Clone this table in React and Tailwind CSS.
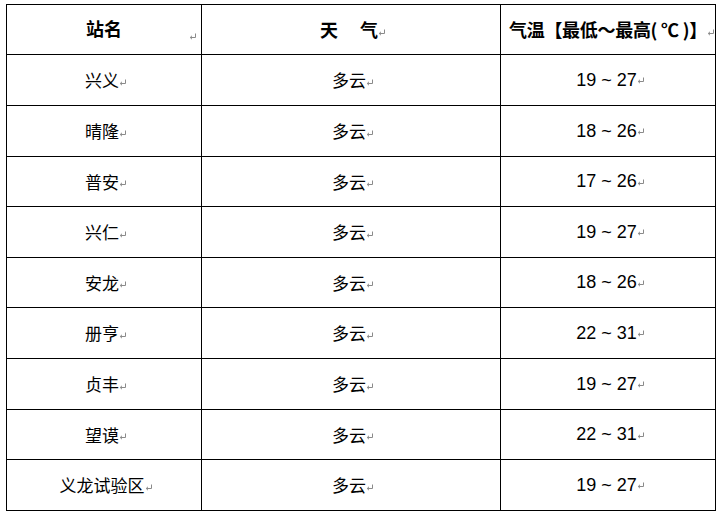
import React from "react";

const rows = [
  ["兴义", "多云", "19 ~ 27"],
  ["晴隆", "多云", "18 ~ 26"],
  ["普安", "多云", "17 ~ 26"],
  ["兴仁", "多云", "19 ~ 27"],
  ["安龙", "多云", "18 ~ 26"],
  ["册亨", "多云", "22 ~ 31"],
  ["贞丰", "多云", "19 ~ 27"],
  ["望谟", "多云", "22 ~ 31"],
  ["义龙试验区", "多云", "19 ~ 27"],
];
const heights = ["h-[51px]", "h-[51px]", "h-[50px]", "h-[51px]", "h-[50px]", "h-[51px]", "h-[51px]", "h-[50px]", "h-[51px]"];

const cjk = { fontFamily: '"Noto Sans CJK SC", "Noto Sans", sans-serif' };
const arial = { fontFamily: '"Liberation Sans", Arial, sans-serif' };

function Mark({ className = "" }) {
  return (
    <svg width="8" height="8" viewBox="0 0 8 8" className={"inline-block " + className}>
      <path d="M6.5 0.5 V4.5 H1.5" stroke="#8a8a8a" strokeWidth="1" fill="none" />
      <path d="M3 2.8 L1.2 4.5 L3 6.2" stroke="#8a8a8a" strokeWidth="1" fill="none" />
    </svg>
  );
}

export default function App() {
  return (
    <div className="w-[718px] h-[514px] overflow-hidden bg-white pt-[4px] pl-[6px]">
      <div className="flex">
        <table className="table-fixed border-collapse w-[709px] shrink-0">
          <colgroup>
            <col className="w-[195px]" />
            <col className="w-[299px]" />
            <col className="w-[215px]" />
          </colgroup>
          <thead>
            <tr className="h-[50px]">
              <th className="relative border border-black p-0 text-center align-middle">
                <span className="text-[18px] font-bold text-black relative top-[-1px]" style={cjk}>站名</span>
                <Mark className="absolute right-[4px] top-[28px]" />
              </th>
              <th className="border border-black p-0 pl-[4px] text-center align-middle">
                <span className="text-[18px] font-bold text-black" style={cjk}>天<span className="inline-block w-[22px]"></span>气</span>
                <Mark />
              </th>
              <th className="border border-black p-0 text-left align-middle whitespace-nowrap overflow-visible">
                <span className="pl-[8px] text-[18px] font-bold text-black tracking-[-0.3px]" style={cjk}>
                  气温【最低～最高(<span className="inline-block w-[4px]"></span>℃<span className="inline-block w-[4px]"></span>)】
                </span>
                <Mark />
              </th>
            </tr>
          </thead>
          <tbody>
            {rows.map((r, i) => (
              <tr key={i} className={heights[i]}>
                <td className="border border-black p-0 pl-[4px] text-center align-middle">
                  <span className="text-[17px] text-black" style={cjk}>{r[0]}</span>
                  <Mark />
                </td>
                <td className="border border-black p-0 pl-[4px] text-center align-middle">
                  <span className="text-[17px] text-black" style={cjk}>{r[1]}</span>
                  <Mark />
                </td>
                <td className="border border-black p-0 pl-[5px] text-center align-middle">
                  <span className="text-[18px] text-black" style={arial}>{r[2]}</span>
                  <Mark />
                </td>
              </tr>
            ))}
          </tbody>
        </table>
        <div className="flex flex-col shrink-0 pl-[1px]">
          <div className="h-[50px] pt-[20px]"><Mark /></div>
          {heights.map((h, i) => (
            <div key={i} className={h + " pt-[6px]"}><Mark /></div>
          ))}
        </div>
      </div>
    </div>
  );
}
